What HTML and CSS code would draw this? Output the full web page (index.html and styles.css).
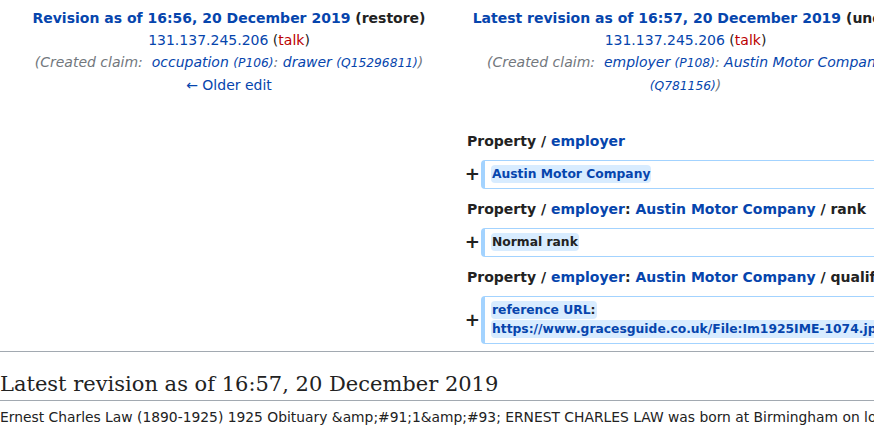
FILE: index.html
```html
<!DOCTYPE html>
<html lang="en">
<head>
<meta charset="utf-8">
<title>Difference between revisions</title>
<link rel="stylesheet" href="styles.css">
</head>
<body>
<div class="page">
  <div class="diff">
    <div class="diff-title">
      <div class="title-line"><a href="#" class="link">Revision as of 16:56, 20 December 2019</a> <span class="paren">(<a href="#" class="visited">restore</a>)</span></div>
      <div><a href="#" class="link">131.137.245.206</a> (<a href="#" class="new">talk</a>)</div>
      <div class="comment">(<span class="auto">Created claim:&nbsp;</span> <a href="#" class="link">occupation <span class="id">(P106)</span></a>: <a href="#" class="link">drawer <span class="id">(Q15296811)</span></a>)</div>
      <div><a href="#" class="link">← Older edit</a></div>
    </div>
    <div class="diff-title">
      <div class="title-line"><a href="#" class="link">Latest revision as of 16:57, 20 December 2019</a> <span class="paren">(<a href="#" class="visited">undo</a>)</span></div>
      <div><a href="#" class="link">131.137.245.206</a> (<a href="#" class="new">talk</a>)</div>
      <div class="comment">(<span class="auto">Created claim:&nbsp;</span> <a href="#" class="link">employer <span class="id">(P108)</span></a>: <a href="#" class="link">Austin Motor Company <span class="id">(Q781156)</span></a>)</div>
    </div>
    <div class="diff-side"></div>
    <div class="diff-side right">
      <div class="prop">Property / <a href="#" class="link">employer</a></div>
      <div class="added">
        <div class="marker">+</div>
        <div class="box"><span class="chg"><a href="#" class="link">Austin Motor Company</a></span></div>
      </div>
      <div class="prop">Property / <a href="#" class="link">employer</a>: <a href="#" class="link">Austin Motor Company</a> / rank</div>
      <div class="added">
        <div class="marker">+</div>
        <div class="box"><span class="chg">Normal rank</span></div>
      </div>
      <div class="prop">Property / <a href="#" class="link">employer</a>: <a href="#" class="link">Austin Motor Company</a> / qualifier</div>
      <div class="added">
        <div class="marker">+</div>
        <div class="box"><span class="chg"><a href="#" class="link">reference URL</a>: <a href="#" class="link">https://www.gracesguide.co.uk/File:Im1925IME-1074.jpg</a></span></div>
      </div>
    </div>
  </div>
  <hr class="sep">
  <h2 class="heading">Latest revision as of 16:57, 20 December 2019</h2>
  <p class="text">Ernest Charles Law (1890-1925) 1925 Obituary &amp;amp;#91;1&amp;amp;#93; ERNEST CHARLES LAW was born at Birmingham on lot May, 1890, and was educated at King Edward's School.</p>
</div>
</body>
</html>
```
FILE: styles.css
```css
html, body {
  margin: 0;
  padding: 0;
  overflow: hidden;
  background: #fff;
}
body {
  font-family: "DejaVu Sans", sans-serif;
  font-size: 14px;
  color: #222;
}
.page {
  width: 917px;
}
a {
  text-decoration: none;
}
.link {
  color: #0645ad;
}
.visited {
  color: #222;
}
.new {
  color: #ba0000;
}
.diff {
  display: grid;
  grid-template-columns: 450px 455px;
  column-gap: 4px;
  padding: 0 4px;
}
.diff-title {
  text-align: center;
  padding-top: 7px;
  line-height: 22px;
  height: 88px;
}
.title-line {
  font-weight: bold;
}
.comment {
  font-style: italic;
  color: #72777d;
}
.id {
  font-size: 0.875em;
}
.diff-side.right {
  padding-top: 35px;
}
.prop {
  padding-left: 9px;
  line-height: 22px;
  font-weight: bold;
  margin-bottom: 8px;
  white-space: nowrap;
}
.added {
  display: flex;
  align-items: center;
  margin-bottom: 9px;
}
.added:last-child {
  margin-bottom: 7px;
}
.marker {
  flex: none;
  width: 23px;
  box-sizing: border-box;
  padding-right: 1px;
  text-align: right;
  font-size: 1.3em;
  font-weight: bold;
  line-height: 1;
}
.box {
  flex: 1;
  border: 1px solid #a3d3ff;
  border-left-width: 4px;
  border-radius: 0.33em;
  padding: 4px 6px;
  font-size: 0.88em;
  line-height: 19px;
}
.chg {
  background: #d8ecff;
  font-weight: bold;
  padding: 2px 1px;
  border-radius: 0.33em;
  -webkit-box-decoration-break: clone;
  box-decoration-break: clone;
}
.sep {
  margin: 0;
  height: 0;
  border: 0;
  border-top: 1px solid #a2a9b1;
}
.heading {
  font-family: "DejaVu Serif", serif;
  font-size: 21px;
  font-weight: normal;
  line-height: 27px;
  margin: 19px 0 0;
  padding-bottom: 2px;
  border-bottom: 1px solid #a2a9b1;
}
.text {
  margin: 5px 0 0;
  line-height: 22px;
  font-size: 13.85px;
  white-space: nowrap;
}
```
